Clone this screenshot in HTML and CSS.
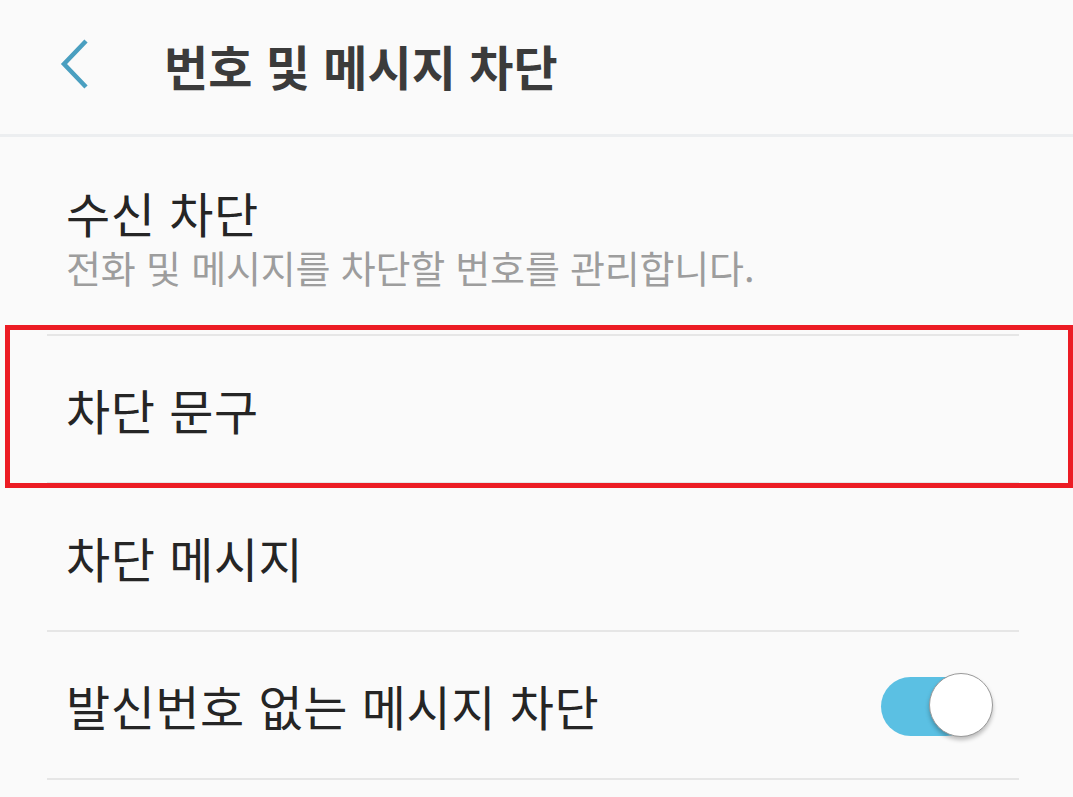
FILE: index.html
```html
<!DOCTYPE html>
<html lang="ko">
<head>
<meta charset="utf-8">
<title>번호 및 메시지 차단</title>
<link rel="stylesheet" href="styles.css">
</head>
<body>
<div class="screen">
  <header class="appbar">
    <button class="back" aria-label="뒤로">
      <svg width="34" height="52" viewBox="0 0 34 52">
        <polyline points="30,2 8,25 30,48" fill="none" stroke="#4a9fc0" stroke-width="4.5"/>
      </svg>
    </button>
    <h1 class="title">번호 및 메시지 차단</h1>
  </header>
  <ul class="list">
    <li class="item item-two">
      <div class="texts">
        <div class="primary">수신 차단</div>
        <div class="secondary">전화 및 메시지를 차단할 번호를 관리합니다.</div>
      </div>
    </li>
    <li class="item">
      <div class="primary">차단 문구</div>
    </li>
    <li class="item">
      <div class="primary">차단 메시지</div>
    </li>
    <li class="item">
      <div class="primary">발신번호 없는 메시지 차단</div>
      <div class="switch on"><span class="knob"></span></div>
    </li>
  </ul>
  <div class="highlight"></div>
</div>
</body>
</html>
```
FILE: styles.css
```css
* { box-sizing: border-box; }
html, body {
  margin: 0;
  padding: 0;
  background: #fafafa;
}
body {
  font-family: "Noto Sans CJK KR", "Noto Sans", sans-serif;
  width: 1073px;
  height: 797px;
  overflow: hidden;
}
.screen {
  position: relative;
  height: 797px;
}
.appbar {
  height: 137px;
  border-bottom: 3px solid #eceef0;
  display: flex;
  align-items: center;
  padding-left: 56px;
}
.back {
  border: 0;
  background: none;
  padding: 0;
  width: 34px;
  height: 52px;
  display: block;
  margin-top: -4px;
}
.back svg { display: block; }
.title {
  margin: -5px 0 0 74px;
  font-size: 48px;
  font-weight: 700;
  color: #3b3b3b;
  line-height: 1;
}
.list {
  list-style: none;
  margin: 0 54px 0 47px;
  padding: 0;
}
.item {
  height: 148px;
  border-bottom: 2px solid #e6e6e6;
  display: flex;
  align-items: center;
  justify-content: space-between;
  padding-left: 19px;
  padding-right: 26px;
}
.item-two {
  height: 199px;
}
.texts {
  display: flex;
  flex-direction: column;
}
.primary {
  font-size: 48px;
  line-height: 60px;
  letter-spacing: 0.5px;
  color: #252525;
}
.secondary {
  font-size: 38px;
  line-height: 46px;
  letter-spacing: -0.2px;
  color: #9d9d9d;
  margin-top: 2px;
}
.switch {
  position: relative;
  width: 112px;
  height: 64px;
}
.switch::before {
  content: "";
  position: absolute;
  left: 0;
  top: 4px;
  width: 94px;
  height: 59px;
  border-radius: 30px;
  background: #5bc0e3;
}
.knob {
  position: absolute;
  right: 0;
  top: 0;
  width: 64px;
  height: 64px;
  border-radius: 50%;
  background: #fff;
  border: 1.5px solid #9a9a9a;
  box-shadow: 0 3px 4px rgba(0,0,0,0.25);
}
.highlight {
  position: absolute;
  left: 5px;
  top: 325px;
  width: 1068px;
  height: 163px;
  border: 5px solid #ec1c24;
  pointer-events: none;
}
```
